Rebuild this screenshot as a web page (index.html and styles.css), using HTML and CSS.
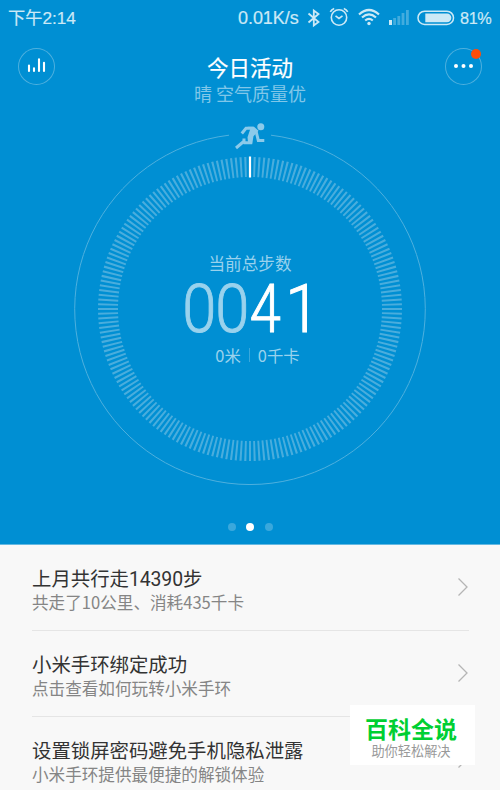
FILE: index.html
```
<!DOCTYPE html>
<html lang="zh-CN">
<head>
<meta charset="utf-8">
<title>今日活动</title>
<link rel="stylesheet" href="styles.css">
</head>
<body>
<main class="screen">
  <section class="hero">
    <div class="status">
      <span class="time">下午2:14</span>
      <span class="speed">0.01K/s</span>
      <svg class="bt" width="14" height="20" viewBox="0 0 14 20"><path d="M1.500 5.500 11.500 14 6.800 17.500V2.500l4.700 3.500L1.500 14.500" fill="none" stroke="currentColor" stroke-width="1.800"/></svg>
      <svg class="alarm" width="20" height="20" viewBox="0 0 20 20" fill="none" stroke="currentColor" stroke-width="1.600"><circle cx="10" cy="10.500" r="7.700"/><path d="M1.300 4.800Q2.500 2.300 5.200 1.400M18.700 4.800Q17.500 2.300 14.800 1.400M6.500 8.800 10 11.500 13.500 8.800"/></svg>
      <svg class="wifi" width="22" height="18" viewBox="0 0 22 18" fill="none" stroke="currentColor" stroke-width="2.200"><path d="M1 6.500Q11-2.500 21 6.500M4 9.500Q11 3.300 18 9.500M7.200 12.500Q11 9.300 14.800 12.500"/><circle cx="11" cy="15.500" r="1.700" fill="currentColor" stroke="none"/></svg>
      <svg class="signal" width="20" height="16" viewBox="0 0 20 16" fill="currentColor"><path d="M0 11h3v5H0z"/><path opacity=".32" d="M4.200 9h2.800v7H4.200zM8.400 7h2.800v9H8.400zM12.600 4h2.800v12h-2.800zM17 1h2.800v15H17z"/></svg>
      <svg class="battery" width="38" height="16" viewBox="0 0 38 16"><rect x="1" y="1.200" width="35.500" height="13.300" rx="6.600" fill="none" stroke="currentColor" stroke-width="1.500"/><path d="M8.300 3.500H30a4.300 4.300 0 0 1 0 8.700H8.300z" fill="currentColor"/></svg>
      <span class="percent">81%</span>
    </div>
    <header class="bar">
      <div class="round"><svg width="37" height="37" viewBox="0 0 37 37"><path d="M11 17.500v5.500M16 20.200v2.800M21 11.200V23M26 14.800V23" stroke="#fff" stroke-width="2.100" stroke-linecap="round"/></svg></div>
      <div class="heading"><h1>今日活动</h1><p>晴 空气质量优</p></div>
      <div class="round"><svg width="37" height="37" viewBox="0 0 37 37" fill="#fff"><circle cx="11" cy="18" r="2"/><circle cx="18.500" cy="18" r="2"/><circle cx="26" cy="18" r="2"/></svg><i class="badge"></i></div>
    </header>
    <div class="dial">
      <svg class="rings" width="360" height="370" viewBox="70 119 360 370">
        <path d="M271 135.200A175.300 175.300 0 1 1 229 135.200" fill="none" stroke="#4eb0de" stroke-width="1"/>
        <circle cx="250" cy="309" r="142" fill="none" stroke="#49addd" stroke-width="20" pathLength="2000" stroke-dasharray="4.500 5.500" stroke-dashoffset="2.250"/>
        <path d="M250 156.500v21" stroke="#fff" stroke-width="2.200"/>
        <path d="M241.800 133.500 246 128.200H253.500M236 148 244 141.200V138.500M243.500 142.700H250.700V138M256 131 258.300 140.400H264.300" fill="none" stroke="#8bcaea" stroke-width="3"/>
        <path d="M247.500 126.800h6.500l4.500 4-5 5.500-1.300 7.500h-4l-.7-6.500 2.700-8z" fill="#8bcaea"/>
        <circle cx="260.800" cy="126.700" r="3.500" fill="#8bcaea"/>
      </svg>
      <div class="reading">
        <p class="label">当前总步数</p>
        <div class="steps"><span class="zero">0</span><span class="zero">0</span><span class="four">4</span><span class="one">1</span></div>
        <div class="extra"><span>0米</span><i></i><span>0千卡</span></div>
      </div>
    </div>
    <div class="dots"><i></i><i class="on"></i><i></i></div>
  </section>
  <section class="list">
    <article class="row"><div><h2>上月共行走<b>14390</b>步</h2><p>共走了10公里、消耗435千卡</p></div><svg width="12" height="20" viewBox="0 0 12 20"><path d="M1.500 1.500 10 10 1.500 18.500"/></svg></article>
    <article class="row"><div><h2>小米手环绑定成功</h2><p>点击查看如何玩转小米手环</p></div><svg width="12" height="20" viewBox="0 0 12 20"><path d="M1.500 1.500 10 10 1.500 18.500"/></svg></article>
    <article class="row"><div><h2>设置锁屏密码避免手机隐私泄露</h2><p>小米手环提供最便捷的解锁体验</p></div><svg width="12" height="20" viewBox="0 0 12 20"><path d="M1.500 1.500 10 10 1.500 18.500"/></svg></article>
  </section>
  <aside class="mark"><strong>百科全说</strong><span>助你轻松解决</span></aside>
</main>
</body>
</html>
```
FILE: styles.css
```
* { box-sizing: border-box; margin: 0; padding: 0; }
body { font-family: "Noto Sans CJK SC", sans-serif; background: #f8f8f8; }
.screen { position: relative; width: 500px; height: 790px; overflow: hidden; }
svg { display: block; flex: none; }
.hero { height: 545px; background: #008fd3; border-bottom: 1px solid #65b9e2; }

.status { display: flex; align-items: center; height: 36px; padding-left: 8px; color: #cce9f6; font: 18px/36px "Liberation Sans", "Noto Sans CJK SC", sans-serif; white-space: nowrap; }
.time { width: 230px; font-size: 17.2px; -webkit-text-stroke: .2px; }
.speed { width: 69px; letter-spacing: -.05px; -webkit-text-stroke: .2px; }
.bt { margin-right: 5px; margin-top: -1px; }
.alarm { margin: -2px 9px 0 3px; }
.wifi { margin-right: 9px; margin-top: -2px; }
.signal { margin-right: 8px; margin-top: -2px; }
.battery { margin-right: 5px; margin-top: -1px; }
.percent { font-size: 16.3px; letter-spacing: -.4px; -webkit-text-stroke: .2px; }

.bar { display: flex; justify-content: space-between; height: 83px; padding: 12px 18px 0; }
.round { position: relative; width: 37px; height: 37px; border-radius: 50%; box-shadow: inset 0 0 0 1px #4eb0de; }
.badge { position: absolute; right: 1px; top: 1px; width: 10px; height: 10px; border-radius: 50%; background: #ff4d08; }
.heading { text-align: center; color: #fff; padding-top: 4px; }
h1 { font-size: 21.5px; line-height: 30px; font-weight: 400; -webkit-text-stroke: .2px; }
.heading p { font-size: 18px; line-height: 22px; color: #80c7e9; }

.dial { display: grid; justify-items: center; height: 370px; }
.rings, .reading { grid-area: 1 / 1; }
.reading { padding-top: 132px; text-align: center; color: #99d2ed; }
.label { font-size: 16.6px; line-height: 24px; }
.steps { display: flex; height: 68px; margin-left: -2px; font: 300 66px/70px Roboto, sans-serif; justify-content: center; }
.steps span { display: block; width: 33px; text-align: center; }
.steps .zero { transform: scaleX(.93); text-indent: -2px; -webkit-text-stroke: .9px; }
.steps .four, .steps .one { color: #fff; -webkit-text-stroke: 1px; }
.steps .four { transform: scaleX(.85); text-indent: -2px; }
.steps .one { transform: translateX(7px) scaleX(.95); text-indent: -6px; }
.extra { display: flex; justify-content: center; gap: 8px; font-size: 16.4px; line-height: 24px; margin-left: 15px; }
.extra i { width: 1px; height: 14px; margin-top: 5px; background: #3aa8dc; }

.dots { display: flex; justify-content: center; gap: 10.500px; padding-top: 34px; }
.dots i { width: 8px; height: 8px; border-radius: 50%; background: #3aa8dc; }
.dots .on { background: #fff; }

.list { padding: 0 31px 0 32px; background: #f8f8f8; }
.row { display: flex; justify-content: space-between; height: 86px; padding-top: 19px; border-bottom: 1px solid #e5e5e5; white-space: nowrap; }
.row h2 { font-size: 19.400px; line-height: 27px; font-weight: 400; color: #333; }
.row b { font: 19.400px/20px Roboto, sans-serif; letter-spacing: -.1px; }
.row p { font-size: 16.600px; line-height: 23px; color: #858585; }
.row svg { margin-top: 13px; fill: none; stroke: #b5b5b5; stroke-width: 1.300; }

.mark { position: absolute; left: 350px; top: 705px; width: 125px; height: 60px; background: #fff; text-align: center; padding: 8px 3px 0 0; }
.mark strong { display: block; font-size: 23px; line-height: 30px; font-weight: 700; color: #00cf32; }
.mark span { display: block; font-size: 13.200px; line-height: 16px; color: #999; }
```
